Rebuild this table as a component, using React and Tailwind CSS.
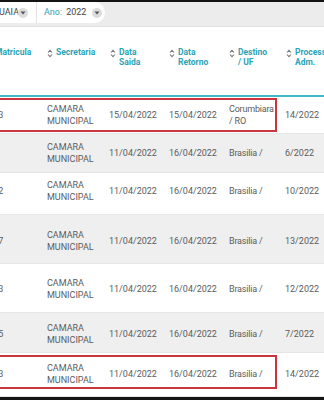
import React from "react";

const Sort = ({ className = "" }) => (
  <svg width="6" height="9" viewBox="0 0 6 9" className={className}>
    <path d="M1 3.5 L3 1.3 L5 3.5" fill="none" stroke="#7a7a7a" strokeWidth="1.1" />
    <path d="M1 5.5 L3 7.7 L5 5.5" fill="none" stroke="#7a7a7a" strokeWidth="1.1" />
  </svg>
);

const Caret = () => (
  <span className="w-[10px] h-[10px] shrink-0 rounded-full bg-[#dcdcdc] flex items-center justify-center">
    <svg width="6" height="4" viewBox="0 0 6 4">
      <path d="M0.5 0.6 L5.5 0.6 L3 3.6 Z" fill="#555" />
    </svg>
  </span>
);

const cols = ["w-[64px] ml-[-17px]", "w-[62px]", "w-[60px]", "w-[60px]", "w-[56px]", "w-[50px]"];
const hcols = ["w-[61px] ml-[-14px]", "w-[63px]", "w-[59px]", "w-[60px]", "w-[57px]", "w-[50px]"];

const headers = [
  ["Matricula"],
  ["Secretaria"],
  ["Data", "Saida"],
  ["Data", "Retorno"],
  ["Destino", "/ UF"],
  ["Processo", "Adm."],
];

const rows = [
  { h: "h-[37px]", pt: "pt-[6px]", bg: "bg-white", mat: "1523", s: "15/04/2022", r: "15/04/2022", d: ["Corumbiara", "/ RO"], p: "14/2022", box: "top-[1px] h-[34px]" },
  { h: "h-[39px]", pt: "pt-[7px]", bg: "bg-[#efefef]", mat: "", s: "11/04/2022", r: "16/04/2022", d: ["Brasilia /"], p: "6/2022" },
  { h: "h-[42px]", pt: "pt-[6px]", bg: "bg-white", mat: "1522", s: "11/04/2022", r: "16/04/2022", d: ["Brasilia /"], p: "10/2022" },
  { h: "h-[49px]", pt: "pt-[14px]", bg: "bg-[#efefef]", mat: "1527", s: "11/04/2022", r: "16/04/2022", d: ["Brasilia /"], p: "13/2022" },
  { h: "h-[49px]", pt: "pt-[13px]", bg: "bg-white", mat: "1523", s: "11/04/2022", r: "16/04/2022", d: ["Brasilia /"], p: "12/2022" },
  { h: "h-[40px]", pt: "pt-[9px]", bg: "bg-[#efefef]", mat: "1525", s: "11/04/2022", r: "16/04/2022", d: ["Brasilia /"], p: "7/2022" },
  { h: "h-[44px]", pt: "pt-[9px]", bg: "bg-white", mat: "1523", s: "11/04/2022", r: "16/04/2022", d: ["Brasilia /"], p: "14/2022", box: "top-[2px] h-[34px]" },
];

const Cell = ({ c, children }) => (
  <div className={`${c} shrink-0 h-[24px] flex flex-col justify-center leading-[12px]`}>{children}</div>
);

export default function App() {
  return (
    <div
      className="w-[324px] h-[400px] overflow-hidden bg-white flex flex-col relative"
      style={{ fontFamily: "Roboto, 'Liberation Sans', sans-serif" }}
    >
      <div className="h-[2px] bg-[#141414] shrink-0" />
      <div className="h-[25px] bg-[#ececec] shrink-0 border-b border-[#e2e2e2]">
        <div className="h-[21px] w-[105px] bg-white rounded-r-full flex items-center text-[9px]">
          <span className="ml-[-1px] w-[17px] shrink-0 text-[#444]">UAIA</span>
          <span className="ml-[2px]"><Caret /></span>
          <span className="ml-[8px] w-px h-full shrink-0 bg-[#e4e4e4]" />
          <span className="ml-[7px] text-[#2ea6b6] shrink-0">Ano:</span>
          <span className="ml-[4px] w-[20px] text-[#444] shrink-0">2022</span>
          <span className="ml-[6px]"><Caret /></span>
        </div>
      </div>
      <div className="h-[68px] shrink-0 flex items-start pt-[21px]">
        {headers.map((h, i) => (
          <div key={i} className={`${hcols[i]} shrink-0 flex items-start`}>
            <Sort className="mt-[1px] shrink-0" />
            <div className="ml-[3px] text-[8.5px] font-bold leading-[9.5px] text-[#2ba3b6] whitespace-nowrap">
              {h.map((l, j) => (
                <div key={j}>{l}</div>
              ))}
            </div>
          </div>
        ))}
      </div>
      <div className="h-[2px] bg-[#43b7c3] shrink-0" />
      {rows.map((r, i) => (
        <div key={i} className={`${r.h} ${r.bg} ${r.pt} shrink-0 relative flex items-start border-b border-[#e6e6e6] text-[9px] text-[#5c5c5c]`}>
          <Cell c={cols[0]}>{r.mat}</Cell>
          <Cell c={cols[1]}>
            <div>CAMARA</div>
            <div>MUNICIPAL</div>
          </Cell>
          <Cell c={cols[2]}>{r.s}</Cell>
          <Cell c={cols[3]}>{r.r}</Cell>
          <Cell c={cols[4]}>
            {r.d.map((l, j) => (
              <div key={j} className="tracking-[-0.2px]">{l}</div>
            ))}
          </Cell>
          <Cell c={cols[5]}>{r.p}</Cell>
          {r.box && (
            <div className={`absolute left-[-10px] w-[287px] ${r.box} border-2 border-[#c9363e] pointer-events-none`} />
          )}
        </div>
      ))}
      <div className="absolute left-0 right-0 bottom-0 h-[3px] bg-[#141414]" />
    </div>
  );
}
